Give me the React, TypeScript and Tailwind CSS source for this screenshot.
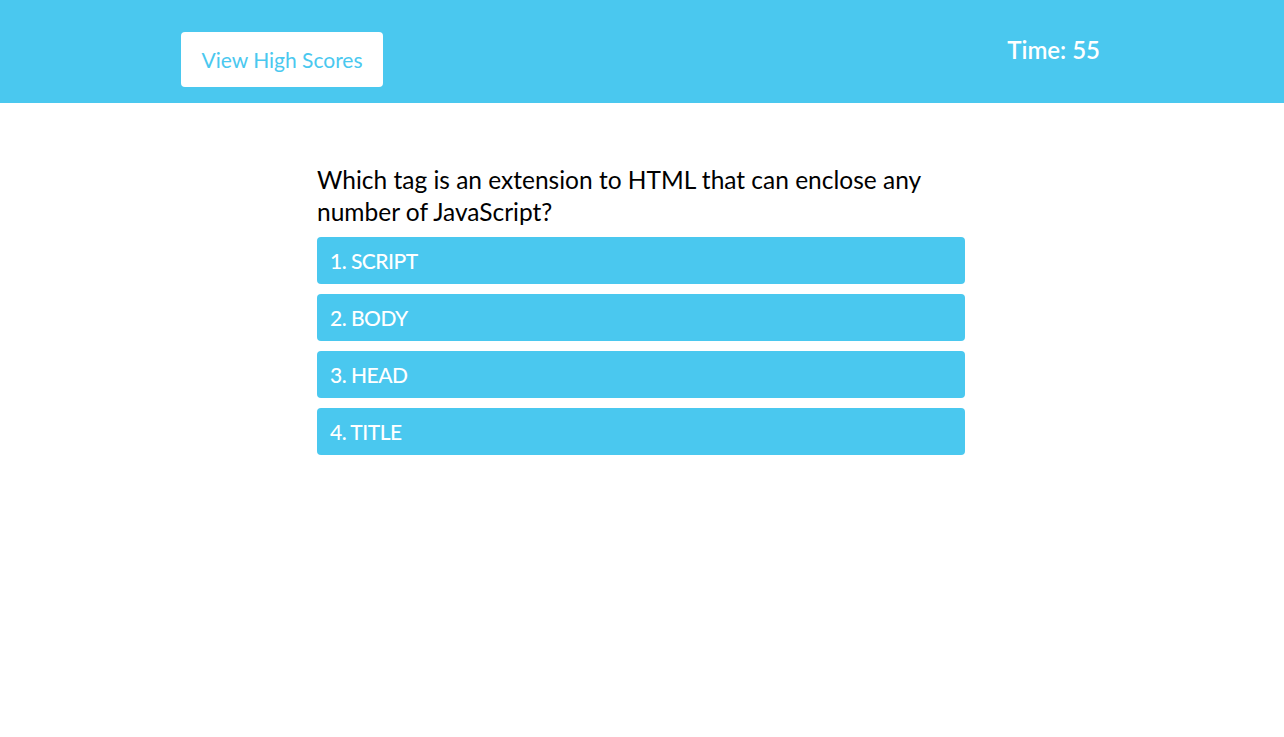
export default function App() {
  const answers = ["1. SCRIPT", "2. BODY", "3. HEAD", "4. TITLE"];

  return (
    <div className="min-h-screen bg-white font-['Lato',sans-serif]">
      {/* header */}
      <header className="h-[103px] bg-[#4ac8ef]">
        <div className="mx-auto flex w-[922px] items-start justify-between pt-[32px]">
          <button className="h-[55px] w-[202px] rounded-[4px] bg-white text-[21px] text-[#4ac8ef]">
            View High Scores
          </button>
          <div className="pt-[2px] pr-[3px] text-[24px] leading-[32px] font-semibold text-white">
            Time: 55
          </div>
        </div>
      </header>

      {/* question */}
      <main className="mt-[61px] ml-[317px] w-[648px]">
        <h2 className="text-[24.5px] leading-[32px] text-black">
          Which tag is an extension to HTML that can enclose any number of
          JavaScript?
        </h2>
        <div className="mt-[9px] flex flex-col gap-[10px]">
          {answers.map((a) => (
            <button
              key={a}
              className="h-[47px] w-full rounded-[4px] bg-[#4ac8ef] px-[13px] text-left text-[21px] font-medium tracking-[-0.5px] text-white"
            >
              {a}
            </button>
          ))}
        </div>
      </main>
    </div>
  );
}
